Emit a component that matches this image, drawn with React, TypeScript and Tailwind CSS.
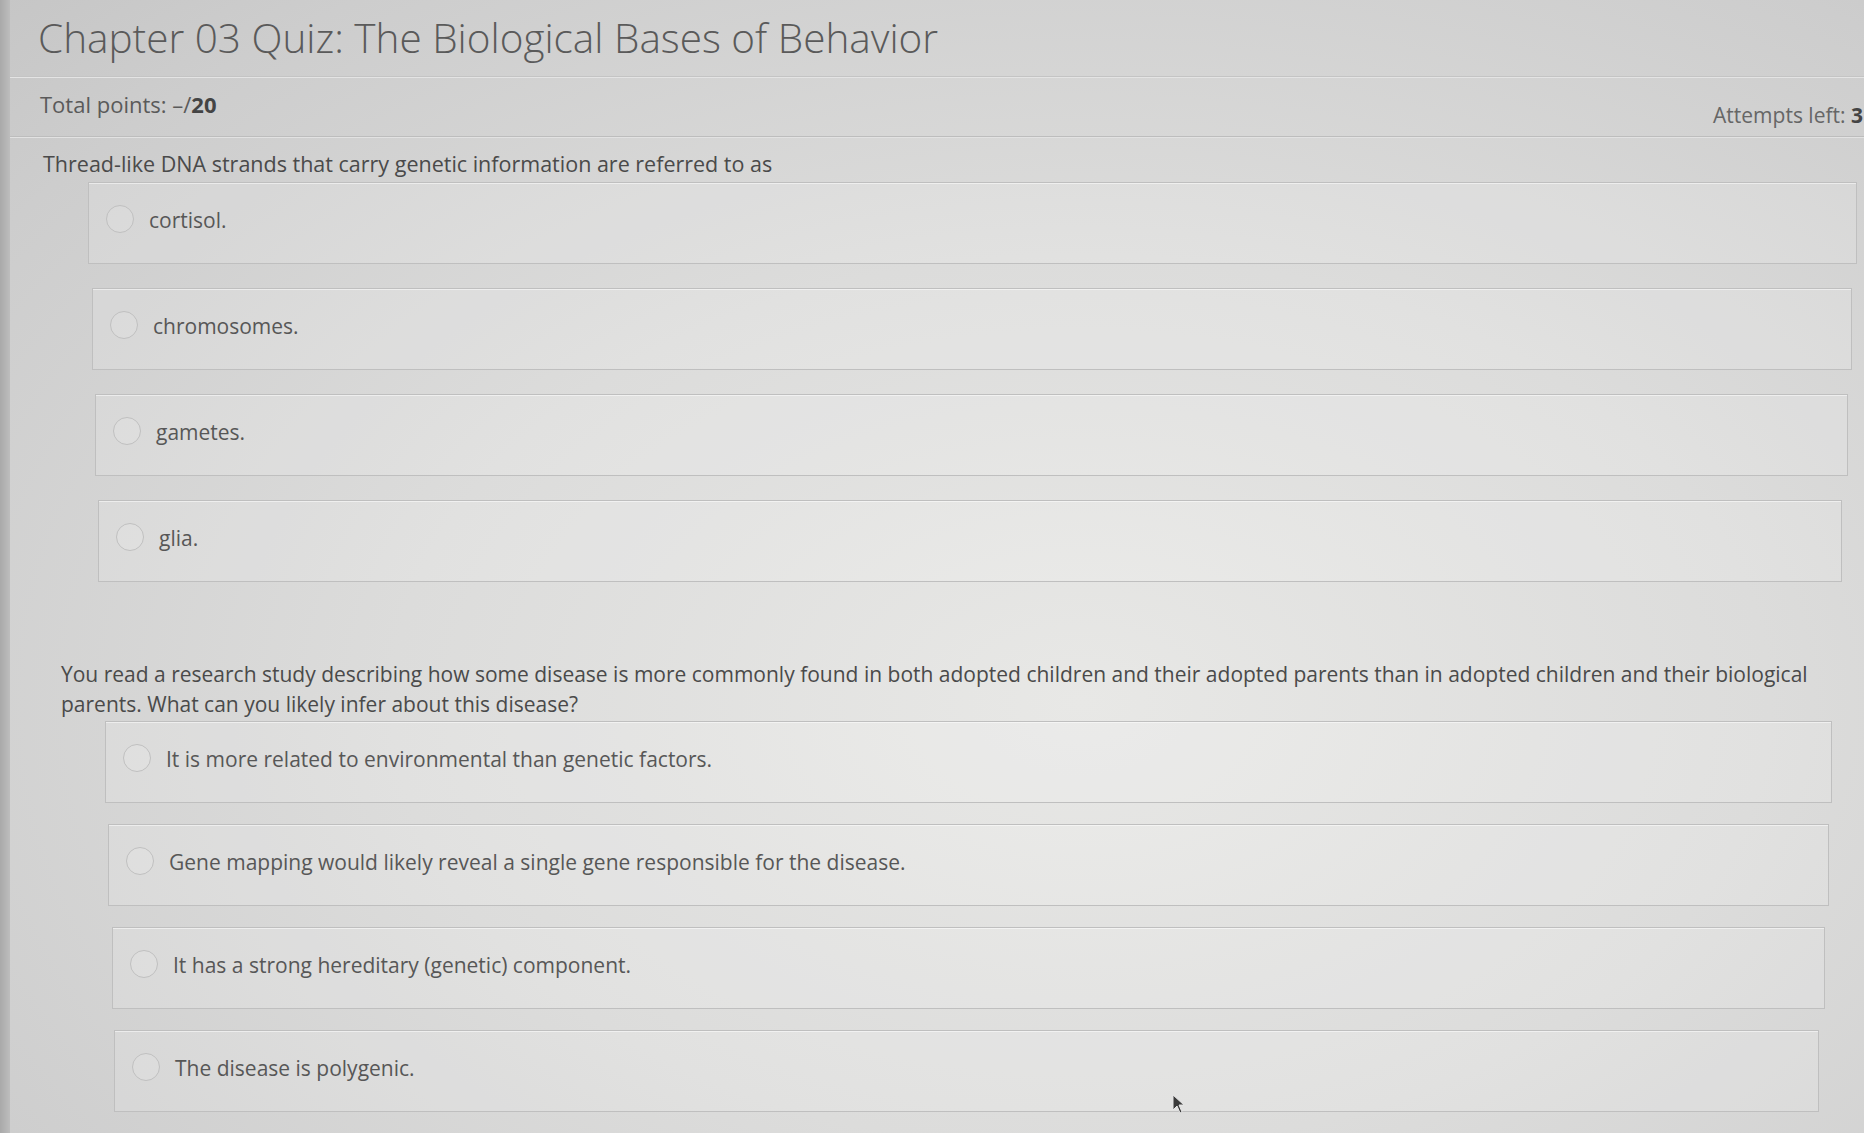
import React from "react";

type Choice = { label: string; box: string };

const first: Choice[] = [
  { label: "cortisol.", box: "ml-[78px] mr-[7px]" },
  { label: "chromosomes.", box: "ml-[82px] mr-[12px]" },
  { label: "gametes.", box: "ml-[85px] mr-[16px]" },
  { label: "glia.", box: "ml-[88px] mr-[22px]" },
];

const second: Choice[] = [
  { label: "It is more related to environmental than genetic factors.", box: "ml-[95px] mr-[32px]" },
  { label: "Gene mapping would likely reveal a single gene responsible for the disease.", box: "ml-[98px] mr-[35px]" },
  { label: "It has a strong hereditary (genetic) component.", box: "ml-[102px] mr-[39px]" },
  { label: "The disease is polygenic.", box: "ml-[104px] mr-[45px]" },
];

function Option({ choice }: { choice: Choice }) {
  return (
    <label
      className={`flex h-[82px] items-start gap-[15px] border border-[#bfbfbf] bg-white/15 pl-[17px] pt-[22px] shadow-[inset_0_1px_0_rgba(255,255,255,0.5)] ${choice.box}`}
    >
      <span className="size-[28px] shrink-0 rounded-full border-[1.5px] border-[#c0c0c0] bg-white/10" />
      <span className="text-[21px] leading-[30px] text-[#575757]">{choice.label}</span>
    </label>
  );
}

function Cursor() {
  return (
    <svg className="absolute left-[1172px] top-[1094px]" width="14" height="20" viewBox="0 0 14 20">
      <path d="M1 1 L1 16 L5 12 L8 19 L10 18 L7 11 L12 11 Z" fill="#3a3a3a" stroke="#e5e5e5" strokeWidth="1" />
    </svg>
  );
}

export default function App() {
  return (
    <div className="relative flex h-[1133px] w-full overflow-hidden bg-[radial-gradient(ellipse_at_58%_62%,#e8e8e6_0%,#dcdcdb_45%,#cdcdcd_85%,#c6c6c6_100%)] font-['Open_Sans','Liberation_Sans',sans-serif]">
      <div className="w-[10px] shrink-0 bg-[linear-gradient(to_right,#a9a9a9,#bdbdbd)]" />
      <div className="flex min-w-0 flex-1 flex-col">
        <h1 className="pl-[28px] pt-[11px] text-[40.5px] font-light leading-[54px] text-[#5a5a5a]">
          Chapter 03 Quiz: The Biological Bases of Behavior
        </h1>
        <div className="mt-[11px] h-[2px] border-t border-[#c4c4c4] bg-[#e4e4e4]" />
        <div className="flex h-[58px] justify-between">
          <p className="pl-[30px] pt-[10px] text-[22px] text-[#5a5a5a]">
            Total points: –/<span className="font-bold text-[#444]">20</span>
          </p>
          <p className="pr-[1px] pt-[22px] text-[21px] text-[#666]">
            Attempts left: <span className="font-bold text-[#444]">3</span>
          </p>
        </div>
        <div className="h-[2px] border-t border-[#bdbdbd] bg-[#e2e2e2]" />

        <p className="pl-[33px] pt-[11px] text-[21.5px] leading-[30px] text-[#4a4a4a]">
          Thread-like DNA strands that carry genetic information are referred to as
        </p>
        <div className="mt-[3px] flex flex-col gap-[24px]">
          {first.map((c) => (
            <Option key={c.label} choice={c} />
          ))}
        </div>

        <p className="mt-[77px] max-w-[1820px] pl-[51px] pr-[10px] text-[21px] leading-[30px] text-[#4a4a4a]">
          You read a research study describing how some disease is more commonly found in both adopted children and
          their adopted parents than in adopted children and their biological parents. What can you likely infer about
          this disease?
        </p>
        <div className="mt-[2px] flex flex-col gap-[21px]">
          {second.map((c) => (
            <Option key={c.label} choice={c} />
          ))}
        </div>
      </div>
      <Cursor />
    </div>
  );
}
